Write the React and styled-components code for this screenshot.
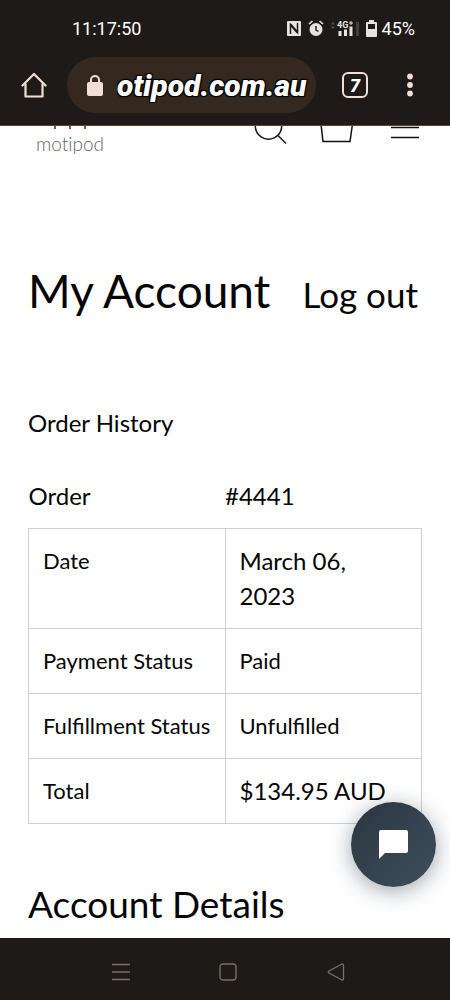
import React, { useState } from 'react'
import styled, { createGlobalStyle } from 'styled-components'

const colours = {
    chrome: '#1e1a17',
    pill: '#35281f',
    cream: '#f0dfd6',
    status: '#e6e4e2',
    navIcon: '#77726e',
    ink: '#050505',
    line: '#cfcfcf',
};

const fonts = {
    system: "Roboto, 'Liberation Sans', sans-serif",
    site: "Lato, 'Open Sans', sans-serif",
};

const GlobalStyle = createGlobalStyle`
    *, *:before, *:after {
        box-sizing: border-box;
    }

    body {
        margin: 0;
        background: #fff;
        color: ${colours.ink};
        font-family: ${fonts.site};
    }

    svg {
        display: block;
        flex: none;
    }
`;

const Screen = styled.div`
    display: flex;
    flex-direction: column;
    min-height: 100vh;
`;

const IconButton = styled.button`
    display: flex;
    align-items: center;
    justify-content: center;
    padding: 0;
    border: 0;
    background: none;
    color: inherit;
    cursor: pointer;
`;

const StatusBar = styled.div`
    display: flex;
    align-items: center;
    justify-content: space-between;
    height: 57px;
    padding: 0 35px 0 72px;
    background: ${colours.chrome};
    color: #fff;
    font-family: ${fonts.system};
    font-size: 18px;
    line-height: 20px;
`;

const StatusIcons = styled.div`
    display: flex;
    align-items: center;
    gap: 7px;
    color: ${colours.status};

    span {
        margin-left: -2px;
        color: #fff;
    }
`;

const BrowserBar = styled.div`
    display: flex;
    align-items: center;
    padding: 0 28px 12px 21px;
    border-bottom: 1px solid #5a4436;
    background: ${colours.chrome};
    color: ${colours.cream};
`;

const AddressBar = styled.label`
    display: flex;
    flex: 1;
    align-items: center;
    gap: 12px;
    min-width: 0;
    height: 56px;
    margin: 0 26px 0 20px;
    padding: 0 4px 0 20px;
    border-radius: 28px;
    background: ${colours.pill};

    input {
        flex: 1;
        min-width: 0;
        height: 44px;
        padding: 0 0 0 2px;
        border: 0;
        outline: 0;
        background: none;
        color: #fff;
        font-family: ${fonts.system};
        font-size: 30px;
        font-style: italic;
        font-weight: 900;
        text-shadow: 1px 1px 1px #000, -1px -1px 1px #000, 1px -1px 1px #000, -1px 1px 1px #000;
    }
`;

const TabsButton = styled(IconButton)`
    width: 26px;
    height: 26px;
    border: 2px solid ${colours.cream};
    border-radius: 6px;
    color: #fff;
    font-family: ${fonts.system};
    font-size: 18px;
    font-style: italic;
    font-weight: 900;
`;

const MenuButton = styled(IconButton)`
    width: 24px;
    margin-left: 30px;
`;

const SiteHeader = styled.header`
    display: flex;
    align-items: flex-start;
    justify-content: space-between;
    height: 30px;
    padding: 0 30px 0 36px;
    overflow: hidden;
`;

const Logo = styled.a`
    display: flex;
    flex-direction: column;
    align-items: center;
    color: #666;
    font-size: 19px;
    font-weight: 300;
    font-variant-ligatures: none;
    line-height: 28px;
    text-decoration: none;
`;

const HeaderIcons = styled.div`
    display: flex;
    align-items: flex-start;
    gap: 32px;
`;

const Main = styled.main`
    position: relative;
    flex: 1;
    padding: 105px 28px 9px;
`;

const TitleRow = styled.div`
    display: flex;
    align-items: baseline;
    justify-content: space-between;
    margin-bottom: 84px;

    h1 {
        margin: 0;
        font-size: 46px;
        font-weight: 400;
        line-height: 60px;
    }

    a {
        margin-right: 4px;
        color: inherit;
        font-size: 35px;
        line-height: 44px;
        text-decoration: none;
    }
`;

const SectionTitle = styled.h2`
    margin: 0;
    font-size: ${props => props.$large ? '37px' : '24px'};
    font-weight: 400;
    line-height: ${props => props.$large ? '50px' : '35px'};
`;

const OrderTable = styled.table`
    width: 100%;
    margin: 38px 0 55px;
    border-collapse: collapse;
    table-layout: fixed;
    font-size: 24px;
    line-height: 35px;

    th, td {
        padding: 14px 14px 15px;
        border: 1px solid ${colours.line};
        font-weight: 400;
        text-align: left;
        vertical-align: top;
    }

    thead th {
        padding: 0 0 15px;
        border-width: 0 0 1px;
    }

    tbody th {
        font-size: 22px;
    }
`;

const OrderValue = styled.td`
    font-size: ${props => props.$figures ? '24px' : '22px'};
`;

const ChatButton = styled(IconButton)`
    position: absolute;
    right: 14px;
    bottom: 51px;
    width: 85px;
    height: 85px;
    border-radius: 50%;
    background: linear-gradient(135deg, #2b3641, #3f4e5c);
    box-shadow: 0 4px 22px rgba(40, 55, 70, 0.45);
    color: #fff;
`;

const NavBar = styled.nav`
    display: grid;
    grid-template-columns: repeat(3, 1fr);
    height: 62px;
    padding: 6px 60px 0 67px;
    background: ${colours.chrome};
    color: ${colours.navIcon};
`;

const NfcIcon = () => (
    <svg width="14" height="15" viewBox="0 0 14 15" fill="none">
        <rect width="14" height="15" rx="1" fill="currentColor" />
        <path d="M3.5 13V3.5L10.5 11.5V2" stroke={colours.chrome} strokeWidth="1.5" />
        <path d="M3.5 3.5L7 7.5M7 7.5L10.5 11.5" stroke={colours.chrome} strokeWidth="2" />
    </svg>
);

const AlarmIcon = () => (
    <svg width="16" height="17" viewBox="0 0 16 17" fill="none">
        <circle cx="8" cy="9.5" r="6.5" fill="currentColor" />
        <path d="M1 4L4.5 1M15 4L11.5 1" stroke="currentColor" strokeWidth="1.6" />
        <path d="M8 6V10L10.5 11.5" stroke={colours.chrome} strokeWidth="1.4" />
    </svg>
);

const SignalIcon = () => (
    <svg width="28" height="17" viewBox="0 0 28 17">
        <path d="M0 4.5L2 2L4 4.5ZM0 6.5L2 9L4 6.5Z" fill="#55504c" />
        <text x="6" y="8" fontFamily="Roboto, sans-serif" fontSize="9" fontWeight="700" fill="currentColor">4G</text>
        <path d="M18 3H22M20 1V5" stroke="currentColor" strokeWidth="1" />
        <path d="M7.5 11h3v5h-3zM13 9.500h3V16h-3zM18.500 6.500h3V16h-3z" fill="currentColor" />
        <path d="M25 2h3v14h-3z" fill="#45403c" />
    </svg>
);

const BatteryIcon = () => (
    <svg width="11" height="17" viewBox="0 0 11 17" fill="currentColor">
        <path fillRule="evenodd" d="M3 0H8V2H10Q11 2 11 3V16Q11 17 10 17H1Q0 17 0 16V3Q0 2 1 2H3ZM2 4V9H9V4Z" />
    </svg>
);

const HomeIcon = () => (
    <svg width="26" height="26" viewBox="0 0 26 26" fill="none" stroke="currentColor" strokeWidth="2.2" strokeLinejoin="round" strokeLinecap="round">
        <path d="M4.500 12V24.500H21.500V12" />
        <path d="M1.500 13.500L13 2L24.500 13.500" />
    </svg>
);

const LockIcon = () => (
    <svg width="16" height="21" viewBox="0 0 16 21" fill="none">
        <rect y="7" width="16" height="14" rx="2" fill="currentColor" />
        <path d="M4 8V5A4 4 0 0 1 12 5V8" stroke="currentColor" strokeWidth="2" />
    </svg>
);

const DotsIcon = () => (
    <svg width="6" height="24" viewBox="0 0 6 24" fill="currentColor">
        <circle cx="3" cy="3.500" r="2.900" />
        <circle cx="3" cy="12" r="2.900" />
        <circle cx="3" cy="20.500" r="2.900" />
    </svg>
);

const LogoMark = () => (
    <svg width="32" height="4" viewBox="0 0 32 4" stroke="#222" strokeWidth="1.400">
        <path d="M1 0V3M16 0V3M31 0V3" />
    </svg>
);

const SearchIcon = () => (
    <svg width="34" height="19" viewBox="0 0 34 19" fill="none" stroke="#111" strokeWidth="1.500">
        <circle cx="14.500" cy="0" r="13.200" />
        <path d="M24 9.500L32 17.500" />
    </svg>
);

const BagIcon = () => (
    <svg width="34" height="19" viewBox="0 0 34 19" fill="none" stroke="#111" strokeWidth="1.500">
        <path d="M1 -2L3 15.500H30L32.500 -2" />
    </svg>
);

const BurgerIcon = () => (
    <svg width="34" height="19" viewBox="0 0 34 19" fill="none" stroke="#111" strokeWidth="1.500">
        <path d="M5 1.500H33M5 11.500H33" />
    </svg>
);

const ChatIcon = () => (
    <svg width="29" height="29" viewBox="0 0 29 29" fill="currentColor">
        <path d="M2 0H27Q29 0 29 2V21Q29 23 27 23H6L0.500 28.500Q0 29 0 28V2Q0 0 2 0Z" />
    </svg>
);

const RecentIcon = () => (
    <svg width="18" height="18" viewBox="0 0 18 18" stroke="currentColor" strokeWidth="1.300">
        <path d="M0 1.500H18M0 9H18M0 16.500H18" />
    </svg>
);

const SquareIcon = () => (
    <svg width="18" height="18" viewBox="0 0 18 18" fill="none" stroke="currentColor" strokeWidth="1.300">
        <rect x="1" y="1" width="16" height="16" rx="3" />
    </svg>
);

const BackIcon = () => (
    <svg width="18" height="18" viewBox="0 0 18 18" fill="none" stroke="currentColor" strokeWidth="1.300" strokeLinejoin="round">
        <path d="M2 8L14.500 1.200Q16.500 0.500 16.500 2.500V15.500Q16.500 17.500 14.500 16.800L2 10Q0.500 9 2 8Z" />
    </svg>
);

const orderRows = [
    { label: 'Date', value: 'March 06, 2023', figures: true },
    { label: 'Payment Status', value: 'Paid' },
    { label: 'Fulfillment Status', value: 'Unfulfilled' },
    { label: 'Total', value: '$134.95 AUD', figures: true },
];

const App = () => {
    const [address, setAddress] = useState('otipod.com.au');

    return (
        <Screen>
            <GlobalStyle />
            <StatusBar>
                <span>11:17:50</span>
                <StatusIcons>
                    <NfcIcon />
                    <AlarmIcon />
                    <SignalIcon />
                    <BatteryIcon />
                    <span>45%</span>
                </StatusIcons>
            </StatusBar>
            <BrowserBar>
                <IconButton aria-label="Home"><HomeIcon /></IconButton>
                <AddressBar>
                    <LockIcon />
                    <input
                        type="text"
                        aria-label="Address"
                        value={address}
                        onChange={(event) => setAddress(event.target.value)}
                    />
                </AddressBar>
                <TabsButton aria-label="Open tabs">7</TabsButton>
                <MenuButton aria-label="Browser menu"><DotsIcon /></MenuButton>
            </BrowserBar>

            <SiteHeader>
                <Logo href="#home">
                    <LogoMark />
                    motipod
                </Logo>
                <HeaderIcons>
                    <IconButton aria-label="Search"><SearchIcon /></IconButton>
                    <IconButton aria-label="Cart"><BagIcon /></IconButton>
                    <IconButton aria-label="Menu"><BurgerIcon /></IconButton>
                </HeaderIcons>
            </SiteHeader>

            <Main>
                <TitleRow>
                    <h1>My Account</h1>
                    <a href="#logout">Log out</a>
                </TitleRow>
                <SectionTitle>Order History</SectionTitle>
                <OrderTable>
                    <thead>
                        <tr>
                            <th scope="col">Order</th>
                            <th scope="col">#4441</th>
                        </tr>
                    </thead>
                    <tbody>
                        {orderRows.map((row) => (
                            <tr key={row.label}>
                                <th scope="row">{row.label}</th>
                                <OrderValue $figures={row.figures}>{row.value}</OrderValue>
                            </tr>
                        ))}
                    </tbody>
                </OrderTable>
                <SectionTitle $large>Account Details</SectionTitle>
                <ChatButton aria-label="Chat"><ChatIcon /></ChatButton>
            </Main>

            <NavBar>
                <IconButton aria-label="Recent apps"><RecentIcon /></IconButton>
                <IconButton aria-label="Home screen"><SquareIcon /></IconButton>
                <IconButton aria-label="Back"><BackIcon /></IconButton>
            </NavBar>
        </Screen>
    )
}

export default App;
